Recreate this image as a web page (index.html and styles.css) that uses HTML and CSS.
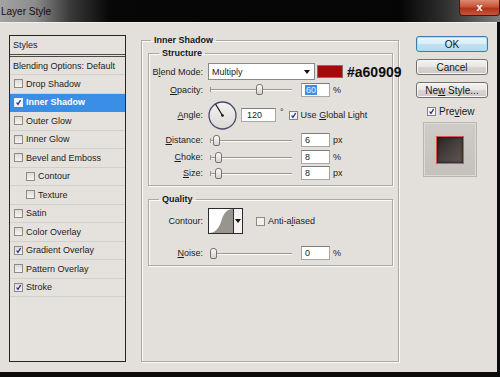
FILE: index.html
```html
<!DOCTYPE html>
<html lang="en">
<head>
    <meta charset="UTF-8">
    <title>Layer Style</title>
    <link rel="stylesheet" href="styles.css">
</head>
<body>
    <div class="window">
        <div class="titlebar">
            <span class="title">Layer Style</span>
            <span class="close">x</span>
        </div>
        <div class="content">
            <ul class="styles-list">
                <li class="head">Styles</li>
                <li class="blend">Blending Options: Default</li>
                <li><span class="cb"></span>Drop Shadow</li>
                <li class="active"><span class="cb on"><svg viewBox="0 0 9 9"><path d="M2 4.5 L3.8 7 L7.2 1.5" /></svg></span>Inner Shadow</li>
                <li><span class="cb"></span>Outer Glow</li>
                <li><span class="cb"></span>Inner Glow</li>
                <li><span class="cb"></span>Bevel and Emboss</li>
                <li class="sub"><span class="cb"></span>Contour</li>
                <li class="sub"><span class="cb"></span>Texture</li>
                <li><span class="cb"></span>Satin</li>
                <li><span class="cb"></span>Color Overlay</li>
                <li><span class="cb on"><svg viewBox="0 0 9 9"><path d="M2 4.5 L3.8 7 L7.2 1.5" /></svg></span>Gradient Overlay</li>
                <li><span class="cb"></span>Pattern Overlay</li>
                <li><span class="cb on"><svg viewBox="0 0 9 9"><path d="M2 4.5 L3.8 7 L7.2 1.5" /></svg></span>Stroke</li>
            </ul>

            <fieldset class="group main">
                <legend>Inner Shadow</legend>

                <fieldset class="group structure">
                    <legend>Structure</legend>
                    <div class="rows">
                        <div class="row">
                            <span class="label">B<u>l</u>end Mode:</span>
                            <div class="select">Multiply<span class="arrow"></span></div>
                            <span class="swatch"></span>
                            <span class="hex">#a60909</span>
                        </div>
                        <div class="row">
                            <span class="label"><u>O</u>pacity:</span>
                            <div class="slider"><span class="thumb" style="left: 46px"></span></div>
                            <div class="field"><span class="selected">60</span></div>
                            <span class="unit">%</span>
                        </div>
                        <div class="row">
                            <span class="label"><u>A</u>ngle:</span>
                            <svg class="dial" viewBox="0 0 29 29">
                                <defs>
                                    <linearGradient id="dialFill" x1="0" y1="0" x2="0" y2="1">
                                        <stop offset="0" stop-color="#f4f3f1"/>
                                        <stop offset="1" stop-color="#dcd9d5"/>
                                    </linearGradient>
                                </defs>
                                <circle cx="14.5" cy="14.5" r="13.5" fill="url(#dialFill)" stroke="#4b4a68" stroke-width="1.3"/>
                                <line x1="14.5" y1="14.5" x2="7.6" y2="3.2" stroke="#111" stroke-width="1.2"/>
                                <circle cx="14.5" cy="14.5" r="1.3" fill="#111"/>
                            </svg>
                            <div class="field angle">120</div>
                            <span class="degree">°</span>
                            <span class="cb on light"><svg viewBox="0 0 9 9"><path d="M2 4.5 L3.8 7 L7.2 1.5" /></svg></span>
                            <span class="check-text">Use <u>G</u>lobal Light</span>
                        </div>
                        <div class="row">
                            <span class="label"><u>D</u>istance:</span>
                            <div class="slider"><span class="thumb" style="left: 3px"></span></div>
                            <div class="field">6</div>
                            <span class="unit">px</span>
                        </div>
                        <div class="row">
                            <span class="label"><u>C</u>hoke:</span>
                            <div class="slider"><span class="thumb" style="left: 5px"></span></div>
                            <div class="field">8</div>
                            <span class="unit">%</span>
                        </div>
                        <div class="row">
                            <span class="label"><u>S</u>ize:</span>
                            <div class="slider"><span class="thumb" style="left: 5px"></span></div>
                            <div class="field">8</div>
                            <span class="unit">px</span>
                        </div>
                    </div>
                </fieldset>

                <fieldset class="group quality">
                    <legend>Quality</legend>
                    <div class="row contour-row">
                        <span class="label">Contour:</span>
                        <div class="contour">
                            <svg class="curve" viewBox="0 0 24 24">
                                <path d="M0 24 C6 24 10 20 13 10 C15 4 18 0 24 0 L24 24 Z" fill="#9a948e"/>
                            </svg>
                            <span class="contour-arrow"><span class="arrow"></span></span>
                        </div>
                        <span class="cb aa"></span>
                        <span class="check-text">Anti-a<u>l</u>iased</span>
                    </div>
                    <div class="row noise-row">
                        <span class="label"><u>N</u>oise:</span>
                        <div class="slider"><span class="thumb" style="left: 0"></span></div>
                        <div class="field">0</div>
                        <span class="unit">%</span>
                    </div>
                </fieldset>
            </fieldset>

            <div class="actions">
                <button class="btn default">OK</button>
                <button class="btn">Cancel</button>
                <button class="btn">Ne<u>w</u> Style...</button>
                <div class="preview-toggle">
                    <span class="cb on light"><svg viewBox="0 0 9 9"><path d="M2 4.5 L3.8 7 L7.2 1.5" /></svg></span>
                    <span>Pre<u>v</u>iew</span>
                </div>
                <div class="preview">
                    <div class="preview-square"></div>
                </div>
            </div>
        </div>
    </div>
</body>
</html>
```

FILE: styles.css
```css
body {
    margin: 0;
    font-family: "Liberation Sans", Arial, sans-serif;
    font-size: 9px;
    color: #1c1c1c;
    background: #000;
}

.window {
    width: 500px;
    height: 377px;
    display: flex;
    flex-direction: column;
    background: #0c0c0c;
}

/* title bar */
.titlebar {
    height: 22px;
    display: flex;
    align-items: flex-start;
    background: linear-gradient(to right, #a3a3a3 0, #8c8c8c 35px, #3a3a3a 70px, #070707 110px, #050505 400px, #2f2f2f 445px, #7c7c7c 500px);
}

.title {
    font-size: 10px;
    line-height: 22px;
    padding: 1px 0 0 1px;
    color: #111;
}

.close {
    margin-left: auto;
    width: 41px;
    height: 16px;
    box-sizing: border-box;
    border: 1px solid #4b150c;
    border-top: none;
    border-radius: 0 0 4px 4px;
    background: linear-gradient(#dc8a72, #c8543a 45%, #b23219 55%, #c4583a);
    color: #fff;
    font-size: 11px;
    font-weight: bold;
    text-align: center;
    line-height: 14px;
}

.content {
    flex: 1;
    display: flex;
    align-items: flex-start;
    background: #e3e0dc;
    margin: 0 3px 5px 0;
    padding-left: 9px;
    border-top: 1px solid #f2f0ee;
}

/* left list */
.styles-list {
    margin: 12px 0 0;
    padding: 0;
    list-style: none;
    width: 117px;
    height: 327px;
    box-sizing: border-box;
    border: 1px solid #262626;
    background: #e5e2de;
}

.styles-list li {
    height: 18.5px;
    box-sizing: border-box;
    display: flex;
    align-items: center;
    padding-left: 4px;
    border-bottom: 1px solid #d3cfca;
}

.styles-list .head {
    height: 21px;
    padding-left: 3px;
    border-bottom: 3px double #4c4a48;
}

.styles-list .blend {
    height: 18px;
    padding-left: 3px;
}

.styles-list .sub {
    padding-left: 16px;
}

.styles-list .active {
    background: #3b8ee5;
    color: #fff;
    font-weight: bold;
    border-bottom-color: #3b8ee5;
}

/* checkbox */
.cb {
    width: 9px;
    height: 9px;
    box-sizing: border-box;
    border: 1px solid #8d8b88;
    background: linear-gradient(#dedbd7, #f5f4f2);
    margin-right: 3px;
    flex-shrink: 0;
    display: flex;
}

.cb svg {
    width: 7px;
    height: 7px;
}

.cb path {
    fill: none;
    stroke: #2c2c8a;
    stroke-width: 1.6;
}

.active .cb {
    border-color: #e8eef8;
    background: #f4f6fa;
}

.cb.light {
    background: #f5f5f5;
    border-color: #85837f;
}

/* group boxes */
.group {
    margin: 0;
    padding: 0;
    box-sizing: border-box;
    border: 1px solid #aca8a2;
    box-shadow: inset 1px 1px 0 #fbfaf9, 1px 1px 0 #fbfaf9;
    min-width: 0;
}

.group legend {
    padding: 0 3px;
    font-weight: bold;
    line-height: 12px;
    height: 12px;
    color: #151515;
}

.main {
    margin: 11px 0 0 15px;
    padding: 0 5px 0 6px;
    width: 258px;
    height: 328px;
}

.main > legend {
    margin-left: 3px;
}

.structure {
    margin-top: 1px;
    height: 139px;
    padding-top: 4px;
}

.structure > legend,
.quality > legend {
    margin-left: 10px;
}

.quality {
    margin-top: 7px;
    height: 73px;
    padding-top: 3px;
}

.rows {
    display: grid;
    grid-template-rows: 17px 19px 32px 18px 16px 16px;
}

.row {
    display: flex;
    align-items: center;
}

.label {
    width: 54px;
    flex-shrink: 0;
    text-align: right;
    margin-right: 5px;
}

/* controls */
.select {
    width: 107px;
    height: 17px;
    box-sizing: border-box;
    border: 1px solid #8a8884;
    background: #fff;
    display: flex;
    align-items: center;
    padding-left: 3px;
}

.arrow {
    width: 0;
    height: 0;
    border-left: 3px solid transparent;
    border-right: 3px solid transparent;
    border-top: 4px solid #111;
}

.select .arrow {
    margin-left: auto;
    margin-right: 4px;
}

.swatch {
    width: 26px;
    height: 13px;
    box-sizing: border-box;
    margin-left: 2px;
    background: #a60909;
    border: 1px solid #8c6d6a;
}

.hex {
    margin-left: 4px;
    font-size: 14px;
    font-weight: bold;
    color: #0d0d0d;
    white-space: nowrap;
}

.slider {
    position: relative;
    width: 82px;
    height: 11px;
    margin-left: 2px;
    flex-shrink: 0;
}

.slider::before {
    content: "";
    position: absolute;
    left: 0;
    right: 0;
    top: 5px;
    height: 1px;
    background: #9a9792;
    border-bottom: 1px solid #fbfbfa;
}

.slider::after {
    content: "";
    position: absolute;
    left: 0;
    top: 3px;
    width: 1px;
    height: 5px;
    background: #9a9792;
}

.thumb {
    position: absolute;
    top: 0;
    width: 7px;
    height: 11px;
    box-sizing: border-box;
    border: 1px solid #77746f;
    border-radius: 3px 3px 2px 2px;
    background: linear-gradient(#fbfbfb, #d4d1cd);
    z-index: 1;
}

.field {
    width: 29px;
    height: 14px;
    box-sizing: border-box;
    margin-left: 9px;
    border: 1px solid #a9a7a3;
    border-top-color: #7f7d79;
    background: #fff;
    padding-left: 3px;
    line-height: 12px;
    flex-shrink: 0;
}

.selected {
    background: #3a8ee6;
    color: #e8f2ff;
    padding: 0 1px;
}

.unit {
    margin-left: 3px;
}

.dial {
    width: 29px;
    height: 29px;
    flex-shrink: 0;
}

.field.angle {
    width: 35px;
    margin-left: 4px;
    padding-left: 5px;
}

.degree {
    margin-left: 4px;
    margin-top: -6px;
}

.degree + .cb {
    margin-left: 5px;
}

.check-text {
    white-space: nowrap;
}

/* quality */
.contour-row {
    height: 26px;
}

.contour {
    display: flex;
    height: 26px;
    box-sizing: border-box;
    border: 1px solid #2b2b2b;
    background: #fff;
}

.curve {
    width: 24px;
    height: 24px;
    display: block;
}

.contour-arrow {
    width: 8px;
    border-left: 1px solid #2b2b2b;
    display: flex;
    align-items: center;
    justify-content: center;
    background: #f3f2f0;
}

.cb.aa {
    margin-left: 13px;
    background: #f1f0ee;
}

.noise-row {
    height: 16px;
    margin-top: 11px;
}

/* right column */
.actions {
    margin: 13px 0 0 17px;
    width: 72px;
    display: flex;
    flex-direction: column;
}

.btn {
    height: 16px;
    margin: 0 0 7px;
    padding: 0;
    box-sizing: border-box;
    border: 1px solid #72706c;
    border-radius: 3px;
    background: linear-gradient(#f3f2f1, #e9e7e5 50%, #d8d5d2 50%, #cdcac6);
    font-family: "Liberation Sans", Arial, sans-serif;
    font-size: 10px;
    color: #151515;
    box-shadow: inset 0 0 0 1px #f7f7f7;
}

.btn.default {
    border-color: #3d7bad;
    background: linear-gradient(#eaf5fb, #d9eef9 50%, #c2e2f4 50%, #b4d9ef);
    box-shadow: inset 0 0 0 1px #a6e2fb;
}

.preview-toggle {
    display: flex;
    align-items: center;
    margin: 1px 0 0 11px;
    height: 10px;
    font-size: 10px;
}

.preview {
    margin: 6px 0 0 7px;
    width: 54px;
    height: 55px;
    box-sizing: border-box;
    border: 1px solid #b9b5b0;
    background: linear-gradient(#cfcbc6, #c4c0ba);
    box-shadow: inset 0 0 0 1px #dcd9d5;
    display: flex;
    align-items: center;
    justify-content: center;
}

.preview-square {
    width: 28px;
    height: 28px;
    box-sizing: border-box;
    border: 1px solid #d65454;
    background: linear-gradient(135deg, #2c2220, #4a4341 55%, #5b5653);
    box-shadow: inset 0 0 3px #140606;
}
```
